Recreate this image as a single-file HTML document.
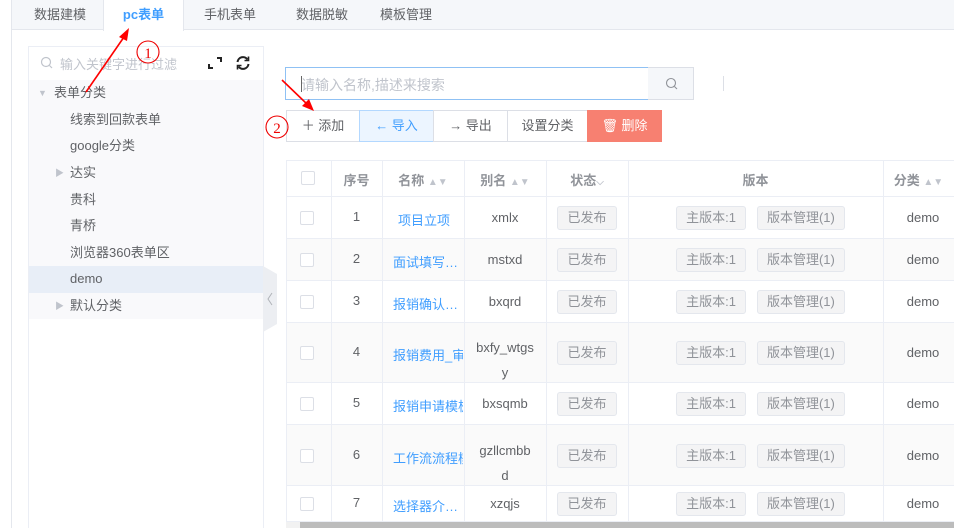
<!DOCTYPE html>
<html><head><meta charset="utf-8"><style>
*{margin:0;padding:0;box-sizing:border-box}
body{width:954px;height:528px;overflow:hidden;background:#fff;font-family:"Liberation Sans","Noto Sans CJK SC",sans-serif;font-size:13px;color:#606266;position:relative}
.a{position:absolute}
.tab{position:absolute;top:0;height:30px;line-height:30px;font-size:13px;color:#606266;text-align:center}
.tree div{position:absolute;font-size:13px;color:#606266;height:26px;line-height:26px}
.btn{position:absolute;top:110px;height:32px;line-height:30px;border:1px solid #dcdfe6;text-align:center;font-size:13px;color:#606266;background:#fff}
.cell{position:absolute;text-align:center;font-size:13px;color:#606266}
.tag{display:inline-block;height:24px;line-height:22px;padding:0 9px;border:1px solid #e4e7ed;background:#f4f4f5;color:#909399;border-radius:3px;font-size:13px}
.cb{position:absolute;width:14px;height:14px;border:1px solid #dcdfe6;border-radius:2px;background:#fff}
.lnk{color:#409eff}
</style></head><body>
<div class="a" style="left:11px;top:0;width:1px;height:528px;background:#e4e7ed"></div>
<div class="a" style="left:12px;top:0;width:942px;height:30px;background:#f5f7fa;border-bottom:1px solid #e4e7ed"></div>
<div class="tab" style="left:20px;width:80px">数据建模</div>
<div class="tab" style="left:103px;width:81px;background:#fff;height:31px;color:#409eff;font-weight:bold;border-left:1px solid #e4e7ed;border-right:1px solid #e4e7ed">pc表单</div>
<div class="tab" style="left:190px;width:80px">手机表单</div>
<div class="tab" style="left:282px;width:80px">数据脱敏</div>
<div class="tab" style="left:366px;width:80px">模板管理</div>

<div class="a" style="left:28px;top:46px;width:236px;height:482px;border:1px solid #ebeef5;border-bottom:none;background:#fff"></div>
<div class="a" style="left:29px;top:80px;width:234px;height:239px;background:#f9f9fb"></div>
<div class="a" style="left:29px;top:266px;width:234px;height:27px;background:#e8eef7"></div>
<svg class="a" style="left:40px;top:56px" width="14" height="14"><circle cx="6" cy="6" r="4.5" fill="none" stroke="#c0c4cc" stroke-width="1.2"/><line x1="9.5" y1="9.5" x2="12" y2="12" stroke="#c0c4cc" stroke-width="1.2"/></svg>
<div class="a" style="left:60px;top:54px;color:#c0c4cc;font-size:13px">输入关键字进行过滤</div>
<svg class="a" style="left:207px;top:55px" width="16" height="16"><path d="M2 9v4h4M14 7V3h-4" fill="none" stroke="#222" stroke-width="2"/></svg>
<svg class="a" style="left:234px;top:54px" width="18" height="18"><path d="M3.5 8a5.5 5.5 0 0 1 10-2.5M14.5 10a5.5 5.5 0 0 1-10 2.5" fill="none" stroke="#222" stroke-width="2"/><path d="M14.5 2.5v4h-4M3.5 15.5v-4h4" fill="none" stroke="#222" stroke-width="1.6"/></svg>
<div class="tree">
<div style="left:38px;top:80px;font-size:9px;color:#c0c4cc">▼</div>
<div style="left:54px;top:80px">表单分类</div>
<div style="left:70px;top:107px">线索到回款表单</div>
<div style="left:70px;top:133px">google分类</div>
<div style="left:55px;top:160px;font-size:9px;color:#c0c4cc">▶</div>
<div style="left:70px;top:160px">达实</div>
<div style="left:70px;top:187px">贵科</div>
<div style="left:70px;top:213px">青桥</div>
<div style="left:70px;top:240px">浏览器360表单区</div>
<div style="left:70px;top:266px">demo</div>
<div style="left:55px;top:293px;font-size:9px;color:#c0c4cc">▶</div>
<div style="left:70px;top:293px">默认分类</div>
</div>
<svg class="a" style="left:263px;top:266px" width="14" height="66"><path d="M0 0L14 8V58L0 66Z" fill="#eceef2"/><path d="M9 27L5 33L9 39" fill="none" stroke="#b0b3b8" stroke-width="1"/></svg>

<div class="a" style="left:285px;top:67px;width:364px;height:33px;border:1px solid #8fc1f4;background:#fff"></div>
<div class="a" style="left:301px;top:75px;color:#c0c4cc;font-size:14px">请输入名称,描述来搜索</div>
<div class="a" style="left:301px;top:76px;width:1px;height:16px;background:#666"></div>
<div class="a" style="left:648px;top:67px;width:46px;height:33px;background:#f5f7fa;border:1px solid #dcdfe6;border-left:none"></div>
<svg class="a" style="left:665px;top:77px" width="14" height="14"><circle cx="6" cy="6" r="4.5" fill="none" stroke="#909399" stroke-width="1.1"/><line x1="9.5" y1="9.5" x2="12" y2="12" stroke="#909399" stroke-width="1.1"/></svg>
<div class="a" style="left:723px;top:76px;width:1px;height:15px;background:#dcdfe6"></div>

<div class="btn" style="left:286px;width:74px">＋ 添加</div>
<div class="btn" style="left:359px;width:75px;background:#ecf5ff;border-color:#b3d8ff;color:#409eff">← 导入</div>
<div class="btn" style="left:433px;width:75px">→ 导出</div>
<div class="btn" style="left:507px;width:81px">设置分类</div>
<div class="btn" style="left:587px;width:75px;background:#f78071;border-color:#f78071;color:#fff">🗑 删除</div>

<div class="a" style="left:286px;top:160px;width:668px;height:362px;border-top:1px solid #ebeef5;border-left:1px solid #ebeef5"></div>
<div id="rows"></div>
<script>
var rows=[[197,239,"1","项目立项","xmlx"],[239,281,"2","面试填写单据","mstxd"],[281,323,"3","报销确认单据","bxqrd"],[323,383,"4","报销费用_审核","bxfy_wtgs<br>y"],[383,425,"5","报销申请模板","bxsqmb"],[425,486,"6","工作流流程模板","gzllcmbb<br>d"],[486,522,"7","选择器介绍说明","xzqjs"]];
var cols=[286,331,382,464,546,628,883,954];
var h='';
h+='<div class="a" style="left:286px;top:160px;width:668px;height:37px;border-bottom:1px solid #ebeef5"></div>';
var hc=['','序号','名称 <span style="color:#c0c4cc;font-size:10px">▲▼</span>','别名 <span style="color:#c0c4cc;font-size:10px">▲▼</span>','状态<span style="color:#c0c4cc;font-size:10px">⌵</span>','版本','分类 <span style="color:#c0c4cc;font-size:10px">▲▼</span>'];
for(var i=1;i<hc.length;i++)h+='<div class="cell" style="left:'+cols[i]+'px;width:'+(cols[i+1]-cols[i])+'px;top:170px;font-weight:bold;color:#909399">'+hc[i]+'</div>';
h+='<div class="cb" style="left:301px;top:171px"></div>';
rows.forEach(function(r,k){
 var t=r[0],b=r[1],m=(t+b)/2;
 h+='<div class="a" style="left:287px;top:'+t+'px;width:667px;height:'+(b-t)+'px;background:'+(k%2?'#fafafa':'#fff')+';border-bottom:1px solid #ebeef5"></div>';
 h+='<div class="cb" style="left:300px;top:'+(m-7)+'px"></div>';
 h+='<div class="cell" style="left:331px;width:51px;top:'+(m-9)+'px">'+r[2]+'</div>';
 var ell=(k==1||k==2||k==6);
 h+='<div class="cell lnk" style="left:384px;width:79px;top:'+(m-8)+'px;white-space:nowrap;overflow:hidden;'+(ell?'text-overflow:ellipsis;':'')+'text-align:left;padding-left:'+(r[3].length<5?14:9)+'px">'+r[3]+'</div>';
 var two=r[4].indexOf('<br>')>0;
 h+='<div class="cell" style="left:464px;width:82px;top:'+(m-(two?18:9))+'px;line-height:'+(two?'25px':'18px')+'">'+r[4]+'</div>';
 h+='<div class="cell" style="left:546px;width:82px;top:'+(m-12)+'px"><span class="tag">已发布</span></div>';
 h+='<div class="cell" style="left:628px;width:255px;top:'+(m-12)+'px;padding-left:10px"><span class="tag">主版本:1</span><span style="display:inline-block;width:11px"></span><span class="tag">版本管理(1)</span></div>';
 h+='<div class="cell" style="left:883px;width:80px;top:'+(m-8)+'px">demo</div>';
});
for(var i=1;i<cols.length-1;i++)h+='<div class="a" style="left:'+cols[i]+'px;top:160px;width:1px;height:362px;background:#ebeef5"></div>';
h+='<div class="a" style="left:286px;top:522px;width:668px;height:6px;background:#f2f2f2"></div><div class="a" style="left:300px;top:522px;width:654px;height:6px;background:#bcbcbc"></div>';
document.getElementById('rows').innerHTML=h;
</script>

<svg class="a" style="left:0;top:0" width="954" height="528">
<line x1="86" y1="92" x2="124" y2="37" stroke="#f00" stroke-width="1.6"/>
<path d="M129 28L119 37L127 41Z" fill="#f00"/>
<circle cx="148" cy="52" r="11" fill="none" stroke="#e00" stroke-width="1.1"/>
<text x="148" y="58" text-anchor="middle" font-size="15" fill="#e00" font-family="Liberation Serif,serif">1</text>
<line x1="282" y1="80" x2="308" y2="105" stroke="#f00" stroke-width="1.6"/>
<path d="M314 111L302 106L309 99Z" fill="#f00"/>
<circle cx="277" cy="127" r="11" fill="none" stroke="#e00" stroke-width="1.1"/>
<text x="277" y="133" text-anchor="middle" font-size="15" fill="#e00" font-family="Liberation Serif,serif">2</text>
</svg>
</body></html>
